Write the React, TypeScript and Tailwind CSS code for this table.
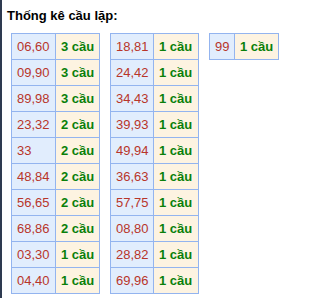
import React from "react";

const t1: [string, string][] = [
  ["06,60", "3 cầu"],
  ["09,90", "3 cầu"],
  ["89,98", "3 cầu"],
  ["23,32", "2 cầu"],
  ["33", "2 cầu"],
  ["48,84", "2 cầu"],
  ["56,65", "2 cầu"],
  ["68,86", "2 cầu"],
  ["03,30", "1 cầu"],
  ["04,40", "1 cầu"],
];
const t2: [string, string][] = [
  ["18,81", "1 cầu"],
  ["24,42", "1 cầu"],
  ["34,43", "1 cầu"],
  ["39,93", "1 cầu"],
  ["49,94", "1 cầu"],
  ["36,63", "1 cầu"],
  ["57,75", "1 cầu"],
  ["08,80", "1 cầu"],
  ["28,82", "1 cầu"],
  ["69,96", "1 cầu"],
];
const t3: [string, string][] = [["99", "1 cầu"]];

function Table({ rows, w1, w2 }: { rows: [string, string][]; w1: string; w2: string }) {
  return (
    <div className="flex flex-col self-start border-l border-t border-[#93b4ef]">
      {rows.map(([a, b], i) => (
        <div key={i} className="flex h-[26px]">
          <div
            className={`${w1} border-r border-b border-[#93b4ef] bg-[#e1edfd] pl-[5px] flex items-center text-[13px] text-[#b8352a]`}
          >
            {a}
          </div>
          <div
            className={`${w2} border-r border-b border-[#93b4ef] bg-[#fdf3e1] pl-[5px] flex items-center text-[13px] font-bold text-[#0a800a]`}
          >
            {b}
          </div>
        </div>
      ))}
    </div>
  );
}

export default function App() {
  return (
    <div
      className="w-[332px] h-[298px] bg-white flex overflow-hidden"
      style={{ fontFamily: '"Liberation Sans", Arial, sans-serif' }}
    >
      <div className="w-[2px] h-full bg-[#2e3a50] shrink-0" />
      <div className="flex flex-col pt-[6px]">
        <div className="pl-[5px] h-[20px] leading-[20px] text-[13px] font-bold text-black">Thống kê cầu lặp:</div>
        <div className="flex mt-[7px] pl-[9px]">
          <Table rows={t1} w1="w-[44px]" w2="w-[44px]" />
          <div className="ml-[10px]">
            <Table rows={t2} w1="w-[43px]" w2="w-[45px]" />
          </div>
          <div className="ml-[10px]">
            <Table rows={t3} w1="w-[25px]" w2="w-[44px]" />
          </div>
        </div>
      </div>
    </div>
  );
}
